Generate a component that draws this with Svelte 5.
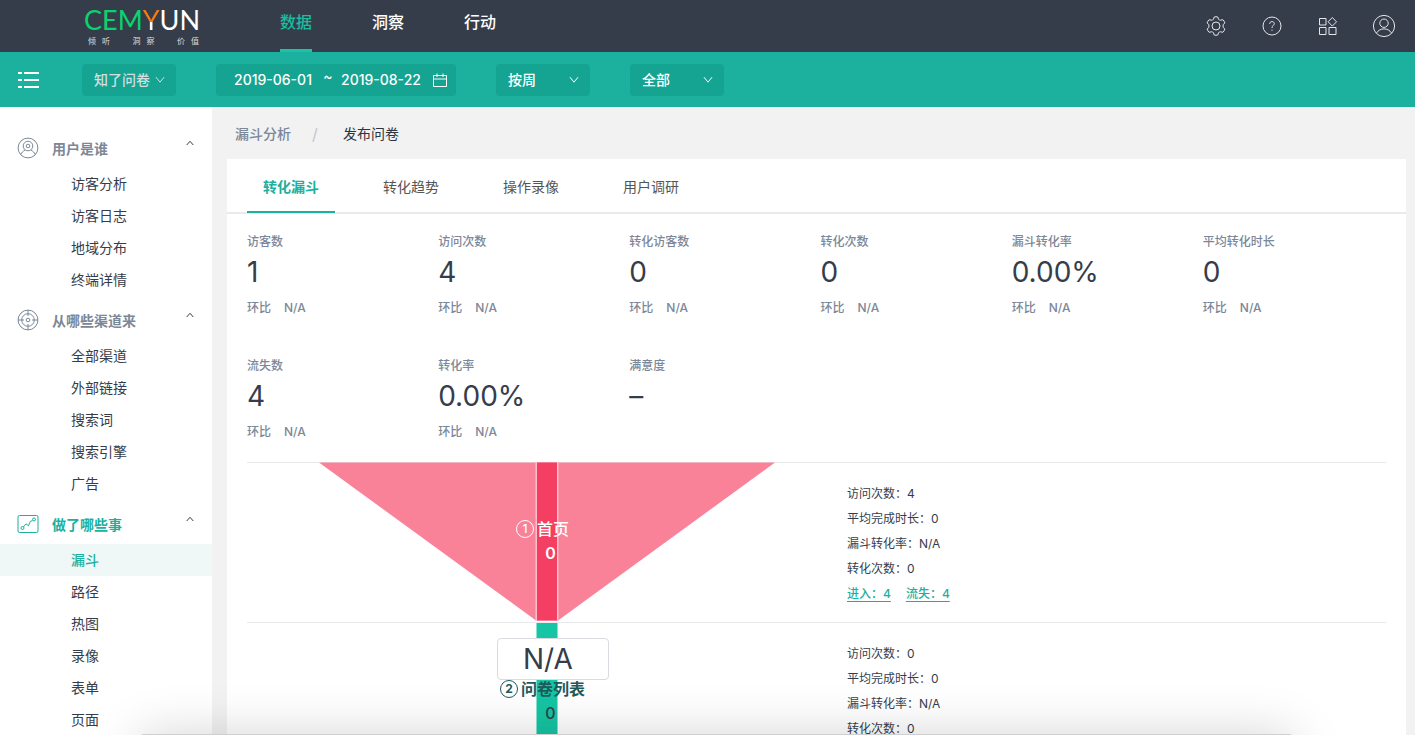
<script>
  const nav = ['数据', '洞察', '行动'];
  const groups = [
    { title: '用户是谁', icon: 'user', items: ['访客分析', '访客日志', '地域分布', '终端详情'] },
    { title: '从哪些渠道来', icon: 'target', items: ['全部渠道', '外部链接', '搜索词', '搜索引擎', '广告'] },
    { title: '做了哪些事', icon: 'chart', active: true, items: ['漏斗', '路径', '热图', '录像', '表单', '页面'] }
  ];
  const tabs = ['转化漏斗', '转化趋势', '操作录像', '用户调研'];
  const metrics = [
    { label: '访客数', value: '1', ratio: 'N/A' },
    { label: '访问次数', value: '4', ratio: 'N/A' },
    { label: '转化访客数', value: '0', ratio: 'N/A' },
    { label: '转化次数', value: '0', ratio: 'N/A' },
    { label: '漏斗转化率', value: '0.00%', ratio: 'N/A' },
    { label: '平均转化时长', value: '0', ratio: 'N/A' },
    { label: '流失数', value: '4', ratio: 'N/A' },
    { label: '转化率', value: '0.00%', ratio: 'N/A' },
    { label: '满意度', value: '–' }
  ];
  const steps = [
    { no: 1, name: '首页', count: 0, rows: ['访问次数：4', '平均完成时长：0', '漏斗转化率：N/A', '转化次数：0'], links: ['进入：4', '流失：4'] },
    { no: 2, name: '问卷列表', count: 0, rate: 'N/A', rows: ['访问次数：0', '平均完成时长：0', '漏斗转化率：N/A', '转化次数：0'], links: [] }
  ];
  let activeTab = $state(0);
  let from = $state('2019-06-01');
  let to = $state('2019-08-22');
</script>

{#snippet chevron()}
  <svg class="chevron" width="10" height="8" viewBox="0 0 10 8" aria-hidden="true"><path d="M1 1.2 5 6.2 9 1.2" /></svg>
{/snippet}

<div class="app">
  <header class="topbar">
    <a class="logo" href="#home" aria-label="CEMYUN">
      <span class="brand"><span class="green">CEM</span><span class="split">Y</span><span>UN</span></span>
      <span class="slogan">
        <span><i>倾</i><i>听</i></span><span><i>洞</i><i>察</i></span><span><i>价</i><i>值</i></span>
      </span>
    </a>
    <nav class="main-nav">
      {#each nav as item, i}
        <a href="#nav{i}" class:active={i === 0}>{item}</a>
      {/each}
    </nav>
    <div class="tools">
      <button aria-label="设置">
        <svg width="24" height="24" viewBox="0 0 24 24"><path d="M10.200 3q1.800-.600 3.600 0l.700 2.300q1 .900 2.200.900l2.200-.500q1.400 1.300 1.900 3.200l-1.600 1.800q-.300 1.300 0 2.600l1.600 1.800q-.500 1.900-1.900 3.200l-2.200-.500q-1.200 0-2.200.900l-.700 2.300q-1.800.600-3.600 0l-.700-2.300q-1-.900-2.200-.900l-2.200.500q-1.400-1.300-1.900-3.200l1.600-1.800q.300-1.300 0-2.600L3.200 8.900q.500-1.900 1.900-3.200l2.200.500q1.200 0 2.200-.900z" /><circle cx="12" cy="12" r="4" /></svg>
      </button>
      <button aria-label="帮助">
        <svg width="24" height="24" viewBox="0 0 24 24"><circle cx="12" cy="12" r="9" /><path d="M9.700 9.900c0-1.500 1-2.300 2.300-2.300s2.300.800 2.300 2c0 1.800-2.300 1.900-2.300 4.400M12 15.600v1.200" /></svg>
      </button>
      <button aria-label="应用">
        <svg width="24" height="24" viewBox="0 0 24 24"><path d="M3.500 4.500h6.500v6.500H3.500zM3.500 13.500h6.500v7H3.500zM13 13.500h7v7h-7zM16.300 3.500l4.200 4.300-4.200 4.300-4.200-4.300z" /></svg>
      </button>
      <button aria-label="账户">
        <svg width="24" height="24" viewBox="0 0 24 24"><circle cx="12" cy="12" r="10.600" /><circle cx="12" cy="9.200" r="4.200" /><path d="M4.300 19.200c2-3 4.500-4.300 7.700-4.300s5.700 1.300 7.700 4.300" /></svg>
      </button>
    </div>
  </header>

  <div class="filters">
    <button class="menu" aria-label="菜单">
      <svg width="22" height="18" viewBox="0 0 22 18"><path d="M0 2h4M6 2h15M0 9h4M6 9h15M0 16h4M6 16h15" /></svg>
    </button>
    <label class="pick soft">
      <select aria-label="项目"><option>知了问卷</option></select>
      {@render chevron()}
    </label>
    <div class="range">
      <input aria-label="开始日期" bind:value={from} />
      <span class="tilde">~</span>
      <input aria-label="结束日期" bind:value={to} />
      <svg width="14" height="14" viewBox="0 0 14 14" aria-hidden="true"><path d="M.500 2.500h13v11H.500zM.500 6h13M4 .500v3.500M10 .500v3.500" /></svg>
    </div>
    <label class="pick">
      <select aria-label="周期"><option>按周</option></select>
      {@render chevron()}
    </label>
    <label class="pick">
      <select aria-label="范围"><option>全部</option></select>
      {@render chevron()}
    </label>
  </div>

  <div class="body">
    <aside>
      {#each groups as group, g}
        <section>
          <button class="group" class:active={group.active}>
            <svg class="group-icon" width="22" height="22" viewBox="0 0 22 22" aria-hidden="true">
              {#if group.icon === 'user'}
                <circle cx="11" cy="11" r="9.900" /><circle cx="11" cy="9" r="4.800" /><circle cx="11" cy="9" r="1.800" />
                <path d="M3.800 17.500c1-2.200 2.300-3.500 4.200-4.400M18.200 17.500c-1-2.200-2.300-3.500-4.200-4.400" />
              {:else if group.icon === 'target'}
                <circle cx="11" cy="11" r="9.900" /><circle cx="11" cy="11" r="6.300" /><circle cx="11" cy="11" r="1.800" />
                <path d="M11 1v6M11 15v6M1 11h6M15 11h6" />
              {:else}
                <rect x="1" y="2.500" width="20" height="17" rx="1.500" />
                <circle cx="5.500" cy="15" r="1.500" /><circle cx="17" cy="6.500" r="1.500" />
                <path d="M6.500 13.800 9 10.800l2.500 2 1.700-4.300 2.300-1" />
              {/if}
            </svg>
            <span>{group.title}</span>
            <svg class="fold" width="8" height="6" viewBox="0 0 8 6" aria-hidden="true"><path d="M.700 5 4 1.300 7.300 5" /></svg>
          </button>
          <ul>
            {#each group.items as item, i}
              <li><a href="#menu{g}-{i}" class:active={group.active && i === 0}>{item}</a></li>
            {/each}
          </ul>
        </section>
      {/each}
    </aside>

    <main>
      <nav class="crumbs" aria-label="面包屑">
        <a href="#funnels">漏斗分析</a><span class="slash">/</span><span class="current">发布问卷</span>
      </nav>

      <div class="card">
        <div class="tabs" role="tablist">
          {#each tabs as tab, i}
            <button role="tab" aria-selected={activeTab === i} class:active={activeTab === i} onclick={() => (activeTab = i)}>{tab}</button>
          {/each}
        </div>

        <div class="metrics">
          {#each metrics as m}
            <div class="metric">
              <div class="name">{m.label}</div>
              <div class="value">{m.value}</div>
              {#if m.ratio}
                <div class="ratio"><span>环比</span><span>{m.ratio}</span></div>
              {/if}
            </div>
          {/each}
        </div>

        <div class="steps">
          {#each steps as step, i}
            <div class="step">
              <div class="funnel" class:second={i === 1}>
                <svg viewBox="0 0 600 160" aria-hidden="true">
                  {#if i === 0}
                    <path d="M72 0.500H528L311 158.500H289z" fill="#f98299" />
                    <path d="M288.500 0.500h23v158h-23z" fill="#fdc0cb" />
                    <path d="M290 0.500h20v158h-20z" fill="#f43f62" />
                  {:else}
                    <path d="M289.500 0h21v160h-21z" fill="#15c5a3" />
                  {/if}
                </svg>
                {#if step.rate}<div class="rate">{step.rate}</div>{/if}
                <div class="caption">
                  <div class="title"><span class="no">{step.no}</span>{step.name}</div>
                  <div class="count">{step.count}</div>
                </div>
              </div>
              <div class="detail">
                {#each step.rows as row}<div>{row}</div>{/each}
                <div class="links">
                  {#each step.links as link, n}<a href="#step{i}-{n}">{link}</a>{/each}
                </div>
              </div>
            </div>
          {/each}
        </div>
      </div>
    </main>
  </div>
  <div class="dock"></div>
</div>

<style>
  :global(body) { margin: 0; }
  .app {
    height: 100vh;
    display: flex;
    flex-direction: column;
    overflow: hidden;
    background: #f2f2f2;
    color: #353d4b;
    font: 14px/20px Inter, "Noto Sans CJK SC", sans-serif;
  }
  .app :is(button, input, select) { font: inherit; color: inherit; background: none; border: 0; padding: 0; margin: 0; }
  button { cursor: pointer; }
  a { color: inherit; text-decoration: none; }
  svg { display: block; flex: none; fill: none; stroke: currentColor; }
  ul { list-style: none; margin: 0; padding: 0; }

  .topbar { flex: none; display: flex; height: 52px; background: #363d4a; color: #fff; }
  .logo { width: 120px; margin-left: 84px; padding-top: 4px; box-sizing: border-box; }
  .brand { display: flex; font: 400 27px/32px Lato, sans-serif; }
  .green { color: #08d46f; }
  .split { background: linear-gradient(#f97b0b 56%, #fff 56%); background-clip: text; color: transparent; }
  .slogan { display: flex; justify-content: space-between; padding: 0 5px 0 4px; font-size: 8px; line-height: 10px; color: #d6d8dc; }
  .slogan span { display: flex; gap: 6px; }
  .slogan i { font-style: normal; }
  .main-nav { display: flex; gap: 60px; margin-left: 76px; font-size: 16px; font-weight: 500; }
  .main-nav a { box-sizing: border-box; height: 52px; line-height: 44px; border-bottom: 3px solid transparent; }
  .main-nav a.active { color: #17bf9f; border-color: #17c5a5; }
  .tools { display: flex; align-items: center; gap: 32px; margin-left: auto; padding-right: 19px; color: #e4e6e9; }

  .filters { flex: none; display: flex; align-items: center; gap: 40px; height: 55px; padding: 1px 18px 0; box-sizing: border-box; background: #1cb09e; color: #fff; font-weight: 500; }
  .menu { width: 24px; }
  .menu svg { stroke-width: 2; }
  .pick, .range { display: flex; align-items: center; box-sizing: border-box; height: 32px; border-radius: 4px; background: #15a492; }
  .pick { position: relative; width: 94px; }
  .app .pick select { appearance: none; width: 100%; height: 32px; padding-left: 12px; }
  .pick .chevron { position: absolute; right: 11px; pointer-events: none; }
  .soft { color: #d0dfe0; }
  .filters .range { width: 240px; padding: 0 9px 0 18px; }
  .range input { width: 81px; flex: none; outline: 0; }
  .range svg { margin-left: auto; }
  .tilde { width: 26px; text-align: center; line-height: 16px; align-self: flex-start; padding-top: 4px; }

  .body { flex: 1; display: flex; min-height: 0; }
  aside { flex: none; width: 212px; padding-top: 17px; box-sizing: border-box; overflow-y: auto; scrollbar-width: none; background: #fff; }
  .app .group { display: flex; align-items: center; gap: 13px; width: 100%; height: 44px; padding: 4px 18px 0 17px; color: #7c8798; font-weight: 700; text-align: left; }
  .group span { padding-top: 1px; }
  .app .group.active { color: #1cb09e; }
  .fold { margin: 0 0 10px auto; color: #353d4b; }
  aside li a { display: block; padding-left: 71px; line-height: 32px; }
  aside li a.active { background: #eff8f6; color: #1cb09e; font-weight: 500; }

  main { flex: 1; min-width: 0; padding: 0 9px 0 15px; overflow-y: auto; scrollbar-width: none; }
  .crumbs { display: flex; align-items: center; height: 52px; padding: 2px 0 0 8px; color: #7c8798; box-sizing: border-box; font-weight: 500; }
  .slash { width: 52px; text-align: center; font-size: 16px; font-weight: 400; color: #c3c7cc; padding-right: 4px; box-sizing: border-box; }
  .current { color: #2c3442; font-weight: 400; }
  .card { background: #fff; }
  .tabs { display: flex; gap: 32px; height: 55px; box-sizing: border-box; padding: 0 20px; border-bottom: 2px solid #e8ebed; }
  .app .tabs button { height: 54px; padding: 3px 16px 0; color: #555; border-bottom: 2px solid transparent; box-sizing: border-box; }
  .app .tabs button.active { color: #1cb09e; border-color: #1cb09e; font-weight: 700; }

  .metrics { display: grid; grid-template-columns: repeat(6, 1fr); row-gap: 38px; padding: 18px 12px 20px 20px; }
  .metric { min-height: 86px; font-size: 12px; color: #7c8798; font-weight: 500; }
  .value { font-size: 28px; line-height: 40px; font-weight: 400; color: #353d4b; }
  .ratio { display: flex; gap: 13px; padding-top: 6px; }

  .steps { padding: 0 20px; }
  .step { display: grid; grid-template-columns: minmax(0, 600px) 1fr; height: 160px; box-sizing: border-box; border-top: 1px solid #e8ebed; }
  .funnel { position: relative; margin-top: -1px; color: #fff; }
  .funnel.second { margin-top: 0; color: #353d4b; }
  .funnel svg { width: 100%; stroke: none; }
  .rate { position: absolute; top: 15px; left: 50%; margin-left: -50px; width: 112px; height: 42px; box-sizing: border-box; padding-left: 25px; border: 1px solid #d8dbdf; border-radius: 4px; background: #fff; font-size: 28px; line-height: 40px; }
  .caption { position: absolute; top: 55px; left: 0; right: 9px; text-align: center; font-size: 16px; line-height: 24px; font-weight: 500; }
  .second .caption { top: 54px; }
  .second .title { color: #1d5b5c; font-weight: 700; }
  .title { display: flex; justify-content: center; align-items: center; gap: 3px; }
  .no { width: 16px; height: 16px; border: 1px solid; border-radius: 50%; font-size: 12px; line-height: 16px; }
  .count { padding-left: 16px; font-weight: 600; }
  .second .count { font-weight: 500; }
  .detail { padding-top: 18px; font-size: 12px; line-height: 25px; }
  .links { display: flex; gap: 15px; color: #1cb09e; font-weight: 500; }
  .links a { text-decoration: underline; text-underline-offset: 3px; }

  .dock { position: fixed; left: 140px; right: 122px; bottom: -199px; height: 200px; border-radius: 4px; background: #cfcfcf; box-shadow: 0 0 50px rgba(0, 0, 0, 0.17); pointer-events: none; }
</style>
